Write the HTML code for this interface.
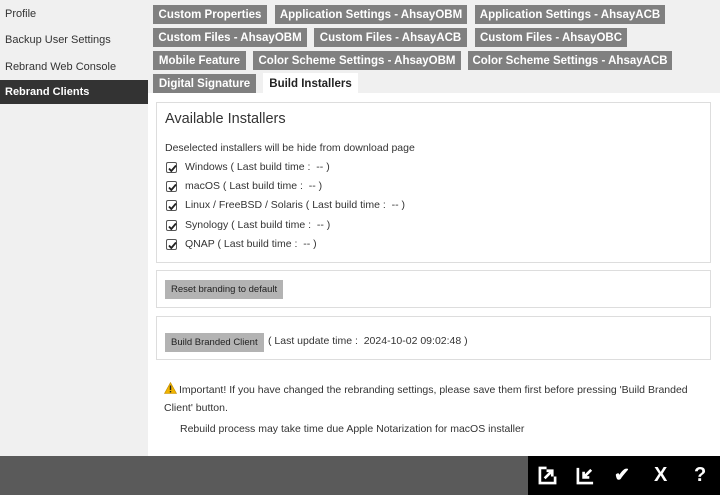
<!DOCTYPE html>
<html><head><meta charset="utf-8"><style>
*{margin:0;padding:0;box-sizing:border-box}
body{width:720px;height:495px;overflow:hidden;position:relative;background:#fff;font-family:"Liberation Sans",Arial,sans-serif;color:#333;font-size:11px}
.side{position:absolute;left:0;top:0;width:148px;height:456px;background:#f0f0f0}
.side div{position:absolute;left:0;width:148px;height:24px;line-height:24px;padding-left:5px;font-size:11px;color:#333}
.side .act{background:#333;color:#fff;font-weight:bold}
.tabbg{position:absolute;left:148px;top:0;width:572px;height:93px;background:#f0f0f0}
.t{position:absolute;height:19px;line-height:20px;background:#808080;color:#fff;font-weight:bold;font-size:11.5px;text-align:center;white-space:nowrap}
.t.w{background:#fff;color:#222;height:20px;line-height:22px}
.p{position:absolute;left:156px;width:555px;border:1px solid #ddd;background:#fff}
.cb{position:absolute;left:166px;width:11px;height:11px;border:1px solid #555;border-radius:2px;background:#fff}
.cb svg{position:absolute;left:0;top:0}
.lbl{position:absolute;left:185px;font-size:10.5px;color:#333}
.btn{position:absolute;background:#b3b3b3;color:#222;font-size:9.5px;height:19px;line-height:19px;padding:0 6px}
.bar{position:absolute;left:0;top:456px;width:720px;height:39px;background:#5a5a5a}
.blk{position:absolute;left:528px;top:456px;width:192px;height:39px;background:#000}
</style></head><body>
<div class="side">
<div style="top:2px">Profile</div>
<div style="top:28px">Backup User Settings</div>
<div style="top:55px">Rebrand Web Console</div>
<div class="act" style="top:80px">Rebrand Clients</div>
</div>
<div class="tabbg"></div>
<div class="t" style="left:153px;top:5px;width:114px">Custom Properties</div>
<div class="t" style="left:275px;top:5px;width:192px">Application Settings - AhsayOBM</div>
<div class="t" style="left:475px;top:5px;width:190px">Application Settings - AhsayACB</div>
<div class="t" style="left:153px;top:28px;width:154px">Custom Files - AhsayOBM</div>
<div class="t" style="left:314px;top:28px;width:153px">Custom Files - AhsayACB</div>
<div class="t" style="left:475px;top:28px;width:152px">Custom Files - AhsayOBC</div>
<div class="t" style="left:153px;top:51px;width:93px">Mobile Feature</div>
<div class="t" style="left:253px;top:51px;width:208px">Color Scheme Settings - AhsayOBM</div>
<div class="t" style="left:468px;top:51px;width:204px">Color Scheme Settings - AhsayACB</div>
<div class="t" style="left:153px;top:74px;width:103px">Digital Signature</div>
<div class="t w" style="left:263px;top:73px;width:95px">Build Installers</div>

<div class="p" style="top:102px;height:161px"></div>
<div style="position:absolute;left:165px;top:111px;font-size:14.5px;color:#333">Available Installers</div>
<div style="position:absolute;left:165px;top:142px;font-size:10.5px">Deselected installers will be hide from download page</div>

<div class="cb" style="top:162px"><svg width="11" height="11" viewBox="0 0 11 11"><path d="M2 5.5L4.3 8L9 2.5" stroke="#222" stroke-width="1.8" fill="none"/></svg></div>
<div class="lbl" style="top:161px">Windows ( Last build time :&nbsp; -- )</div>
<div class="cb" style="top:181px"><svg width="11" height="11" viewBox="0 0 11 11"><path d="M2 5.5L4.3 8L9 2.5" stroke="#222" stroke-width="1.8" fill="none"/></svg></div>
<div class="lbl" style="top:180px">macOS ( Last build time :&nbsp; -- )</div>
<div class="cb" style="top:200px"><svg width="11" height="11" viewBox="0 0 11 11"><path d="M2 5.5L4.3 8L9 2.5" stroke="#222" stroke-width="1.8" fill="none"/></svg></div>
<div class="lbl" style="top:199px">Linux / FreeBSD / Solaris ( Last build time :&nbsp; -- )</div>
<div class="cb" style="top:220px"><svg width="11" height="11" viewBox="0 0 11 11"><path d="M2 5.5L4.3 8L9 2.5" stroke="#222" stroke-width="1.8" fill="none"/></svg></div>
<div class="lbl" style="top:219px">Synology ( Last build time :&nbsp; -- )</div>
<div class="cb" style="top:239px"><svg width="11" height="11" viewBox="0 0 11 11"><path d="M2 5.5L4.3 8L9 2.5" stroke="#222" stroke-width="1.8" fill="none"/></svg></div>
<div class="lbl" style="top:238px">QNAP ( Last build time :&nbsp; -- )</div>

<div class="p" style="top:270px;height:38px"></div>
<div class="btn" style="left:165px;top:280px">Reset branding to default</div>

<div class="p" style="top:316px;height:44px"></div>
<div class="btn" style="left:165px;top:333px">Build Branded Client</div>
<div style="position:absolute;left:268px;top:335px;font-size:10.5px">( Last update time :&nbsp; 2024-10-02 09:02:48 )</div>

<svg style="position:absolute;left:164px;top:382px" width="13" height="12" viewBox="0 0 13 12"><path d="M6.5 0.5L12.5 11.5H0.5Z" fill="#f0b400" stroke="#c08a00" stroke-width="0.6"/><rect x="5.8" y="3.5" width="1.4" height="4.5" fill="#222"/><rect x="5.8" y="9" width="1.4" height="1.4" fill="#222"/></svg>
<div style="position:absolute;left:179px;top:384px;font-size:10.5px">Important! If you have changed the rebranding settings, please save them first before pressing 'Build Branded</div>
<div style="position:absolute;left:164px;top:402px;font-size:10.5px">Client' button.</div>
<div style="position:absolute;left:180px;top:423px;font-size:10.5px">Rebuild process may take time due Apple Notarization for macOS installer</div>

<div class="bar"></div>
<div class="blk">
<svg style="position:absolute;left:10px;top:10px" width="19" height="19" viewBox="0 0 20 20"><path d="M9 2H2V18H18V11" stroke="#fff" stroke-width="2.8" fill="none"/><path d="M7 13L14 6M9 5H15V11" stroke="#fff" stroke-width="2.8" fill="none"/></svg>
<svg style="position:absolute;left:48px;top:10px" width="19" height="19" viewBox="0 0 20 20"><path d="M2 2V18H18" stroke="#fff" stroke-width="2.8" fill="none"/><path d="M16 4L9 11M8 6V12H14" stroke="#fff" stroke-width="2.8" fill="none"/></svg>
<div style="position:absolute;left:86px;top:8px;color:#fff;font-size:19px;font-weight:bold">✔</div>
<div style="position:absolute;left:126px;top:8px;color:#fff;font-size:20px;font-weight:bold">X</div>
<div style="position:absolute;left:166px;top:8px;color:#fff;font-size:20px;font-weight:bold">?</div>
</div>
</body></html>
